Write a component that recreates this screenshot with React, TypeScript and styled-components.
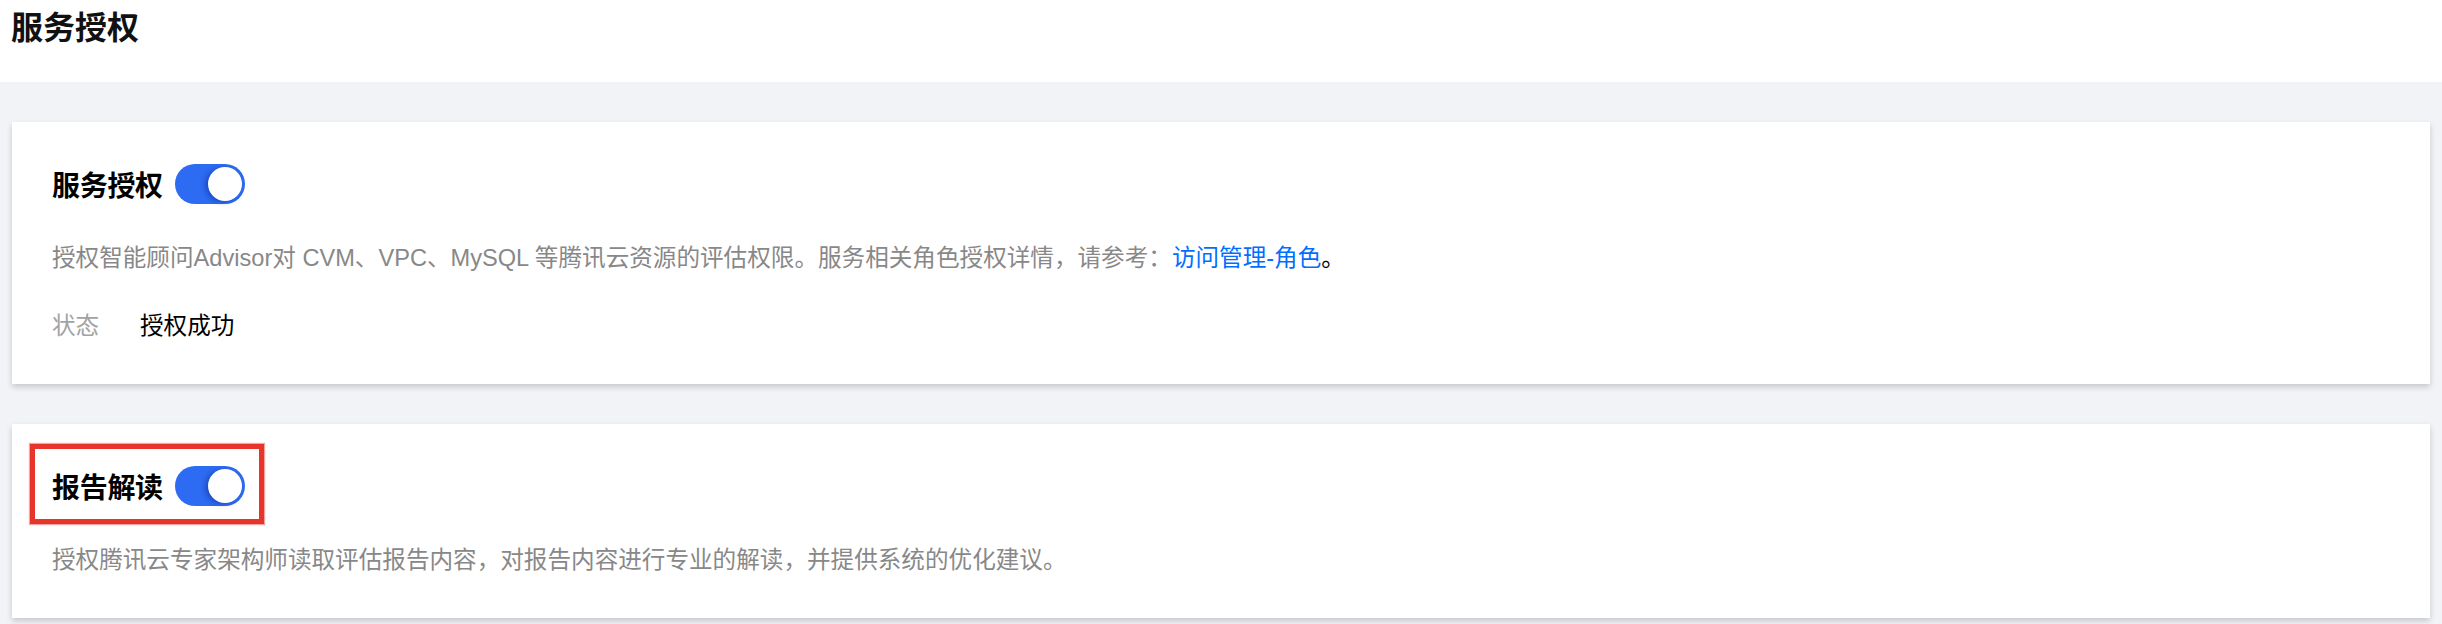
import React, { useState } from 'react'
import styled, { createGlobalStyle } from 'styled-components'

const GlobalStyle = createGlobalStyle`
  html, body {
    margin: 0;
    padding: 0;
    background: #f2f3f7;
    font-family: "Liberation Sans", "Noto Sans CJK SC", sans-serif;
  }
`

const Page = styled.div`
  width: 2442px;
  height: 624px;
  background: #f2f3f7;
  overflow: hidden;
`

const Header = styled.div`
  height: 82px;
  background: #fff;
  display: flex;
  align-items: flex-start;
  padding: 8px 0 0 11px;
  box-sizing: border-box;
`

const PageTitle = styled.h1`
  margin: 0;
  font-size: 32px;
  line-height: 40px;
  font-weight: 700;
  color: #111;
`

const Body = styled.div`
  display: flex;
  flex-direction: column;
  gap: 40px;
  padding: 40px 12px 0 12px;
`

const Card = styled.div`
  background: #fff;
  box-shadow: 0 3px 6px rgba(0, 0, 0, 0.18);
  padding: 42px 44px 41px 40px;
  display: flex;
  flex-direction: column;
`

const TitleRow = styled.div`
  position: relative;
  align-self: flex-start;
  display: flex;
  align-items: center;
  gap: 12px;
  height: 40px;
`

const CardTitle = styled.div`
  font-size: 28px;
  font-weight: 700;
  color: #000;
  letter-spacing: -0.3px;
`

const Highlight = styled.div`
  position: absolute;
  top: -22px;
  left: -22px;
  right: -19px;
  bottom: -18px;
  border: 5px solid #e8352b;
  box-shadow: 0 0 1px 1px rgba(232, 53, 43, 0.45);
  pointer-events: none;
`

const Track = styled.button<{ $on: boolean }>`
  width: 70px;
  height: 40px;
  border: 0;
  padding: 0;
  border-radius: 20px;
  background: ${p => (p.$on ? '#2d6bf3' : '#c5c9d1')};
  display: flex;
  align-items: center;
  justify-content: ${p => (p.$on ? 'flex-end' : 'flex-start')};
  padding: 0 3px;
  box-sizing: border-box;
  cursor: pointer;
`

const Knob = styled.span`
  width: 34px;
  height: 34px;
  border-radius: 50%;
  background: #fff;
  box-shadow: -3px 1px 5px rgba(10, 40, 130, 0.45);
`

const Desc = styled.p`
  margin: 37px 0 0 0;
  font-size: 23.6px;
  line-height: 34px;
  color: #888;
  white-space: nowrap;
`

const Link = styled.a`
  color: #006eff;
  text-decoration: none;
`

const Period = styled.span`
  color: #000;
`

const StatusRow = styled.div`
  display: flex;
  margin-top: 34px;
  font-size: 23.6px;
  line-height: 34px;
`

const StatusLabel = styled.span`
  width: 88px;
  color: #a3a3a3;
`

const StatusValue = styled.span`
  color: #000;
`

const Switch = ({ on, onChange }: { on: boolean; onChange: () => void }) => (
  <Track $on={on} onClick={onChange}>
    <Knob />
  </Track>
)

export default function App() {
  const [auth, setAuth] = useState(true)
  const [report, setReport] = useState(true)

  return (
    <Page>
      <GlobalStyle />
      <Header>
        <PageTitle>服务授权</PageTitle>
      </Header>
      <Body>
        <Card>
          <TitleRow>
            <CardTitle>服务授权</CardTitle>
            <Switch on={auth} onChange={() => setAuth(!auth)} />
          </TitleRow>
          <Desc>
            授权智能顾问Advisor对 CVM、VPC、MySQL 等腾讯云资源的评估权限。服务相关角色授权详情，请参考：
            <Link href="#">访问管理-角色</Link>
            <Period>。</Period>
          </Desc>
          <StatusRow>
            <StatusLabel>状态</StatusLabel>
            <StatusValue>授权成功</StatusValue>
          </StatusRow>
        </Card>
        <Card>
          <TitleRow>
            <CardTitle>报告解读</CardTitle>
            <Switch on={report} onChange={() => setReport(!report)} />
            <Highlight />
          </TitleRow>
          <Desc>授权腾讯云专家架构师读取评估报告内容，对报告内容进行专业的解读，并提供系统的优化建议。</Desc>
        </Card>
      </Body>
    </Page>
  )
}
